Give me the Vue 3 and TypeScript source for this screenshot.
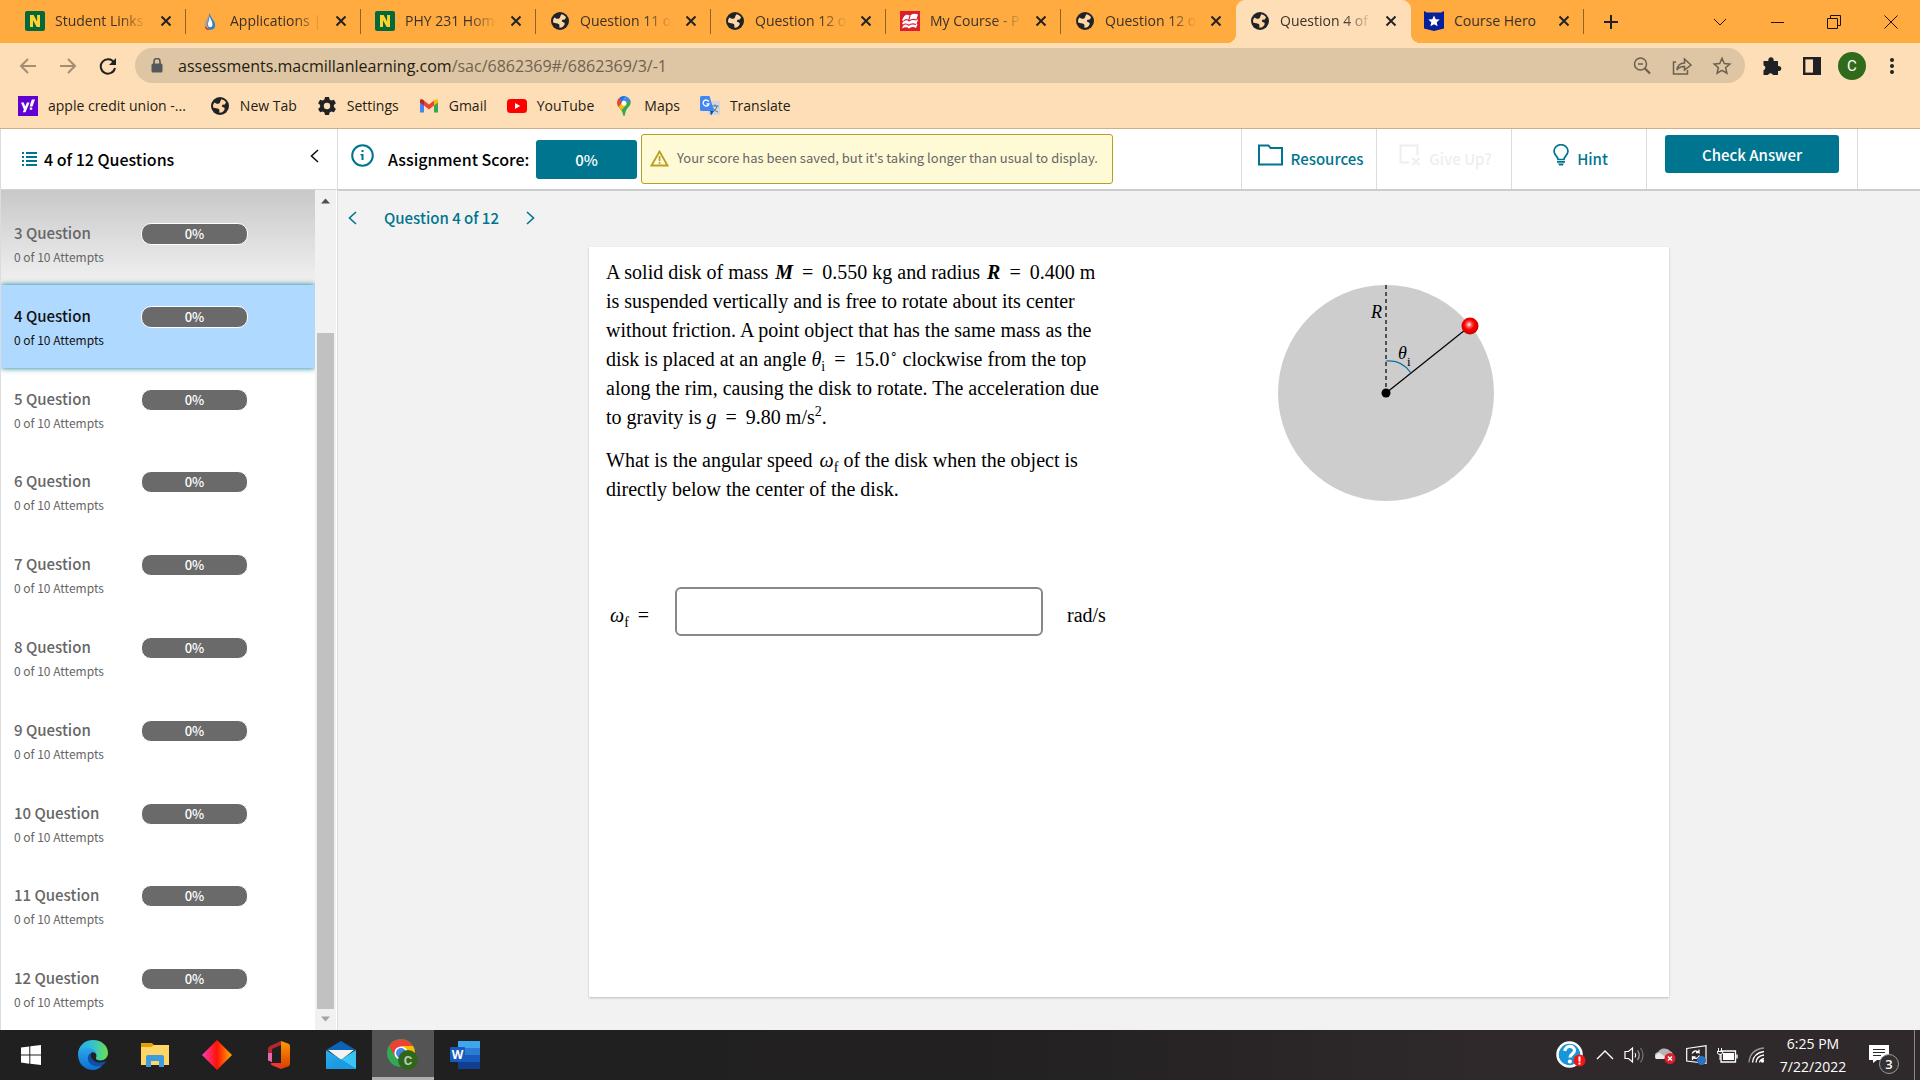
<script setup lang="ts">
import { ref } from 'vue'

interface Tab { icon: string; title: string; active?: boolean; plain?: boolean }
interface Bookmark { icon: string; label: string }

const tabs: Tab[] = [
  { icon: 'norfolk', title: 'Student Links -' },
  { icon: 'drop', title: 'Applications |' },
  { icon: 'norfolk', title: 'PHY 231 Home' },
  { icon: 'globe', title: 'Question 11 of' },
  { icon: 'globe', title: 'Question 12 of' },
  { icon: 'macmillan', title: 'My Course - P' },
  { icon: 'globe', title: 'Question 12 of' },
  { icon: 'globe', title: 'Question 4 of', active: true },
  { icon: 'hero', title: 'Course Hero', plain: true },
]

const bookmarks: Bookmark[] = [
  { icon: 'yahoo', label: 'apple credit union -...' },
  { icon: 'globe', label: 'New Tab' },
  { icon: 'gear', label: 'Settings' },
  { icon: 'gmail', label: 'Gmail' },
  { icon: 'youtube', label: 'YouTube' },
  { icon: 'maps', label: 'Maps' },
  { icon: 'translate', label: 'Translate' },
]

const questions = [3, 4, 5, 6, 7, 8, 9, 10, 11, 12]
const current = ref(4)
const answer = ref('')
</script>

<template>
  <svg class="sprite" aria-hidden="true">
    <defs>
      <linearGradient id="edgeA" x1="0" y1="0" x2="1" y2="0"><stop offset="0" stop-color="#2aa8e8" /><stop offset=".5" stop-color="#33c3d0" /><stop offset="1" stop-color="#6be04a" /></linearGradient>
      <linearGradient id="edgeB" x1="0" y1="0" x2="0" y2="1"><stop offset="0" stop-color="#2fa6ec" /><stop offset="1" stop-color="#0b6fcf" /></linearGradient>
      <linearGradient id="gem" x1="0" y1="0" x2="1" y2="0"><stop offset="0" stop-color="#ff3db5" /><stop offset=".5" stop-color="#ff1208" /><stop offset="1" stop-color="#ffae00" /></linearGradient>
      <linearGradient id="office" x1="0" y1="0" x2="0" y2="1"><stop offset="0" stop-color="#ff9a00" /><stop offset="1" stop-color="#d83b01" /></linearGradient>
      <linearGradient id="mailB" x1="0" y1="0" x2="1" y2="1"><stop offset="0" stop-color="#2bb0f0" /><stop offset="1" stop-color="#1488d8" /></linearGradient>
      <radialGradient id="ball" cx=".45" cy=".42" r=".6"><stop offset="0" stop-color="#fff" /><stop offset=".25" stop-color="#ff5a5a" /><stop offset=".5" stop-color="#fa0000" /><stop offset="1" stop-color="#c80000" /></radialGradient>
    </defs>
    <symbol id="i-norfolk" viewBox="0 0 20 20"><rect width="20" height="20" rx="2" fill="#04693a" /><path d="M5 16V4h3.600l3.500 6.600V4H15v12h-3.300L8 9.200V16z" fill="#ffd22e" /></symbol>
    <symbol id="i-drop" viewBox="0 0 20 20"><path d="M9.500 2C8 7 4.500 9.500 4.500 14a5 5 0 0 0 4 4.800C6 15 9 9 9.500 2z" fill="#b9a08c" /><path d="M9.500 2c-.5 6-3.500 10-1.500 15 1.500 3 6 2 7-1.500C16.200 10.500 11 8 9.500 2z" fill="#2f7fc8" /><path d="M9.500 5c0 5-2.500 7-1 10.500 2 1.500 4 .5 4-2C12.500 10 10 8 9.500 5z" fill="#fff" /><path d="M5 15c1.500 2 3 3 5 4-3 .5-5-1-5-4z" fill="#e01818" /></symbol>
    <symbol id="i-globe" viewBox="0 0 20 20"><circle cx="10" cy="10" r="9" fill="#202326" /><path d="M11.500 3.200c2.200.5 3.600 1.600 4.500 3.200l-1.200 2.100-2.400.2-.6 1.800 2.100 1.100c1.300.6.9 2.100-.1 3.100-.9 1.200-2 1.900-4.100 2.100-.9-.7.5-2.800-1-3.900-1.600-.9-3.200-.8-5.500-1.500C2.700 9.300 3.500 7.500 4.500 6.500c1.700 1 3.100 1.700 4.600.9 1.600-1 .6-1.800 2.400-4.200z" fill="#ffd6a6" /></symbol>
    <symbol id="i-macmillan" viewBox="0 0 20 20"><rect width="20" height="20" fill="#dc1f2e" /><path d="M2 9.500C4 4 6.500 2.500 10 5c2-2.500 4.500-2.700 8-1.500L16.500 8l1.500.7-1.500 4 1 .5-1.500 3.800c-3-1.500-4.500-1-7 .5-2-2-4.500-1.500-7 0L3.500 13.500 2 13l1.500-3z" fill="#fff" /><path d="M3.500 10.200C5.500 8 7.500 8.200 9 10c2.500-2 5-2 8-1M3 14.300c2-2 3.500-1.800 5.500 0 2.500-1.800 4.500-2 7.500-.8M10 5l-1.500 5" fill="none" stroke="#dc1f2e" stroke-width="1.100" /></symbol>
    <symbol id="i-hero" viewBox="0 0 20 20"><path d="M0 0l3 1.500h14L20 0v17.500L10 20 0 17.500z" fill="#06209c" /><path d="M10 4.500l1.700 3.700 4 .4-3 2.700.9 4-3.600-2.100-3.600 2.100.9-4-3-2.700 4-.4z" fill="#fff" /></symbol>
    <symbol id="i-yahoo" viewBox="0 0 20 20"><rect width="20" height="20" fill="#6001d2" /><path d="M3 6.500h2.700l1.600 4 1.600-4h2.700L7.500 16.200H4.800l1.100-2.600zM13.800 3.500h3.200l-2.500 7h-2.900zM11.800 11.500h2.400v2.300h-2.400z" fill="#fff" /></symbol>
    <symbol id="i-gear" viewBox="0 0 20 20"><path fill="#202326" fill-rule="evenodd" d="M8 1h4l.6 2.600 1.700 1 2.600-.8 2 3.400-2 1.900v1.900l2 1.900-2 3.400-2.600-.8-1.700 1L12 19H8l-.6-2.500-1.700-1-2.600.8-2-3.400 2-1.900V9.100l-2-1.900 2-3.400 2.600.8 1.700-1zM10 6.800a3.200 3.200 0 1 0 0 6.400 3.200 3.200 0 0 0 0-6.400z" /></symbol>
    <symbol id="i-gmail" viewBox="0 0 20 20"><path d="M1 5v11.500h4V9z" fill="#4285f4" /><path d="M19 5v11.500h-4V9z" fill="#34a853" /><path d="M5 4.500l5 4 5-4V9.500l-5 4-5-4z" fill="#ea4335" /><path d="M1 4.800C1 3 3.200 2.800 5 4.500v5L1 6.500z" fill="#c5221f" /><path d="M19 4.800C19 3 16.800 2.800 15 4.500v5l4-3z" fill="#fbbc04" /></symbol>
    <symbol id="i-youtube" viewBox="0 0 20 20"><rect y="3" width="20" height="14" rx="3.500" fill="#f00" /><path d="M8 7l5.200 3L8 13z" fill="#fff" /></symbol>
    <symbol id="i-maps" viewBox="0 0 20 20"><path d="M3 7a7 7 0 0 1 2-5l4 4-4.500 5.300A8 8 0 0 1 3 7z" fill="#ea4335" /><path d="M5 2.200A7 7 0 0 1 12.300.6L8 5.600z" fill="#1a73e8" /><path d="M12.300.6A7 7 0 0 1 16.200 4L7.500 14.500c-1-1.300-2.200-2.200-3-3.800z" fill="#4285f4" /><path d="M4.500 10.800L16.200 3.800c2 5-2.200 7.200-4 10.400-1 1.800-1 5.800-2.200 5.800s-1-3.500-2.500-5.500z" fill="#34a853" /><path d="M4.500 10.800L8 6.900l4 2.400-4.800 5.300z" fill="#fbbc04" /><circle cx="10" cy="7.200" r="2.500" fill="#fff" /></symbol>
    <symbol id="i-translate" viewBox="0 0 20 20"><rect x="8" y="5" width="12" height="14" rx="1" fill="#d3d6da" /><path d="M11.500 10h7M15 8.500V10m2 0c-.5 3-2.500 5-5 6m1-4c1 2 3 3.500 5 4" stroke="#54708c" fill="none" /><path d="M1.500 0h8L14 15H1.500A1.500 1.500 0 0 1 0 13.500v-12A1.500 1.500 0 0 1 1.500 0z" fill="#4285f4" /><path d="M10 15h4l-3 4.500z" fill="#174ea6" /><path d="M8.800 5.600A3 3 0 1 0 9 8H6.500" stroke="#fff" stroke-width="1.300" fill="none" /></symbol>
    <symbol id="i-close" viewBox="0 0 12 12"><path d="M1.500 1.500l9 9m0-9l-9 9" stroke="#202124" stroke-width="1.900" /></symbol>
  </svg>

  <div class="screen">
    <header class="chrome">
      <div class="tabstrip">
        <nav class="tabs">
          <div v-for="(tab, i) in tabs" :key="i" class="tab" :class="{ active: tab.active, before: tabs[i + 1]?.active, after: tabs[i - 1]?.active }">
            <svg class="favicon"><use :href="'#i-' + tab.icon" /></svg>
            <span class="tab-title" :class="{ plain: tab.plain }">{{ tab.title }}</span>
            <button class="tab-close" aria-label="Close tab"><svg width="12" height="12"><use href="#i-close" /></svg></button>
          </div>
        </nav>
        <button class="new-tab" aria-label="New tab"><svg width="16" height="16" viewBox="0 0 16 16"><path d="M8 1v14M1 8h14" stroke="#202124" stroke-width="2" /></svg></button>
        <div class="window-buttons">
          <button aria-label="Search tabs"><svg width="14" height="14" viewBox="0 0 14 14"><path d="M1 4l6 6 6-6" /></svg></button>
          <button aria-label="Minimize"><svg width="14" height="14" viewBox="0 0 14 14"><path d="M1 7.500h13" /></svg></button>
          <button aria-label="Restore"><svg width="14" height="14" viewBox="0 0 14 14"><path d="M.5 3.500h10v10H.5zM3.500 3.500v-3h10v10h-3" /></svg></button>
          <button aria-label="Close"><svg width="14" height="14" viewBox="0 0 14 14"><path d="M.5.5l13 13m0-13l-13 13" /></svg></button>
        </div>
      </div>

      <div class="toolbar">
        <div class="nav-buttons">
          <button aria-label="Back"><svg width="18" height="18" viewBox="0 0 18 18" stroke="#a38d73"><path d="M17 9H2m7-7L2 9l7 7" /></svg></button>
          <button aria-label="Forward"><svg width="18" height="18" viewBox="0 0 18 18" stroke="#a38d73"><path d="M1 9h15M9 2l7 7-7 7" /></svg></button>
          <button aria-label="Reload"><svg width="18" height="18" viewBox="0 0 18 18" stroke="#202124"><path d="M15 5.500A7.200 7.200 0 1 0 16 11" /><path d="M17 1v7h-7z" fill="#202124" stroke="none" /></svg></button>
        </div>
        <div class="omnibox">
          <svg width="12" height="16" viewBox="0 0 12 16"><rect y="5.500" x=".5" width="11" height="9" rx="1.500" fill="#54585d" /><path d="M3 6V3.500a3 3 0 0 1 6 0V6" fill="none" stroke="#54585d" stroke-width="1.600" /></svg>
          <p class="url">assessments.macmillanlearning.com<span>/sac/6862369#/6862369/3/-1</span></p>
          <button aria-label="Zoom"><svg width="18" height="18" viewBox="0 0 18 18"><circle cx="7.500" cy="7" r="6" /><path d="M12 11.500l5 5" stroke-width="2.200" /><path d="M5 7h5" /></svg></button>
          <button aria-label="Share"><svg width="20" height="20" viewBox="0 0 20 20"><path d="M4 6H1.500v12h14v-4" /><path d="M5 14c.5-4.500 3-7 7.500-7V3l6.500 6-6.500 5v-3.500C9 10.300 6.500 11.500 5 14z" /></svg></button>
          <button aria-label="Bookmark"><svg width="20" height="20" viewBox="0 0 20 20"><path d="M10 2.300l2.300 5.200 5.500.5-4.200 3.700 1.300 5.500L10 14.300l-4.900 2.900 1.300-5.500L2.200 8l5.500-.5z" /></svg></button>
        </div>
        <div class="actions">
          <button aria-label="Extensions"><svg width="20" height="20" viewBox="0 0 20 20"><path d="M1.500 5h5a2.700 2.700 0 1 1 5 0H16v5a2.600 2.600 0 1 1 0 5v4h-5a2.700 2.700 0 0 0-5 0H1.500v-4.800a2.600 2.600 0 0 0 0-5z" fill="#202124" /></svg></button>
          <button aria-label="Side panel"><svg width="18" height="18" viewBox="0 0 18 18"><rect x="1.200" y="1.200" width="15.600" height="15.600" fill="none" stroke="#202124" stroke-width="2.400" /><path d="M10 1h7v16h-7z" fill="#202124" /></svg></button>
          <button class="avatar" aria-label="Profile">C</button>
          <button aria-label="Menu"><svg width="4" height="18" viewBox="0 0 4 18" fill="#202124"><circle cx="2" cy="3" r="2" /><circle cx="2" cy="9" r="2" /><circle cx="2" cy="15" r="2" /></svg></button>
        </div>
      </div>

      <nav class="bookmarks">
        <a v-for="b in bookmarks" :key="b.label" href="#"><svg class="favicon"><use :href="'#i-' + b.icon" /></svg>{{ b.label }}</a>
      </nav>
    </header>

    <div class="page">
      <aside class="sidebar">
        <div class="side-head">
          <svg width="15" height="14" viewBox="0 0 15 14" fill="#00758f"><path d="M0 0h2v2H0zM4 0h11v2H4zM0 4h2v2H0zM4 4h11v2H4zM0 8h2v2H0zM4 8h11v2H4zM0 12h2v2H0zM4 12h11v2H4z" /></svg>
          <h2>4 of 12 Questions</h2>
          <button aria-label="Collapse"><svg width="9" height="14" viewBox="0 0 9 14"><path d="M8 1L1.500 7 8 13" fill="none" stroke="#111" stroke-width="1.600" /></svg></button>
        </div>
        <div class="side-body">
          <ul class="questions">
            <li v-for="n in questions" :key="n" :class="{ current: n === current }" @click="current = n">
              <div class="q-label"><b>{{ n }} Question</b><small>0 of 10 Attempts</small></div>
              <span class="pill">0%</span>
            </li>
          </ul>
          <div class="scrollbar">
            <svg width="9" height="6" viewBox="0 0 9 6"><path d="M0 5.500L4.500.5 9 5.500z" fill="#505050" /></svg>
            <div class="track"><div class="thumb"></div></div>
            <svg width="9" height="6" viewBox="0 0 9 6"><path d="M0 .5L4.500 5.500 9 .5z" fill="#a3a3a3" /></svg>
          </div>
        </div>
      </aside>

      <main class="content">
        <div class="head">
          <svg class="info" width="23" height="23" viewBox="0 0 23 23"><circle cx="11.500" cy="11.500" r="10.300" fill="none" stroke="#00758f" stroke-width="2" /><path d="M10.500 6h2v2h-2zM9.500 10h3v6h-2v-4.500h-1z" fill="#00758f" /></svg>
          <strong class="score-label">Assignment Score:</strong>
          <button class="score">0%</button>
          <div class="notice" role="status">
            <svg width="19" height="17" viewBox="0 0 19 17"><path d="M9.500 1.500l8 14h-16z" fill="none" stroke="#b89f22" stroke-width="1.800" /><path d="M8.700 6h1.700v5H8.700zM8.700 12h1.700v1.700H8.700z" fill="#b89f22" /></svg>
            <span>Your score has been saved, but it's taking longer than usual to display.</span>
          </div>
          <div class="head-actions">
            <button class="cell"><svg width="25" height="22" viewBox="0 0 25 22"><path d="M1 20.500V1.500h9.500l2 2.500H24v16.500z" fill="none" stroke="#00758f" stroke-width="2" /></svg><span>Resources</span></button>
            <button class="cell disabled" disabled><svg width="22" height="22" viewBox="0 0 22 22"><path d="M10 18.500H1.500v-17h17v10" fill="none" stroke="#eee" stroke-width="2" /><path d="M13.500 14l7 7m0-7l-7 7" stroke="#eee" stroke-width="2" /></svg><span>Give Up?</span></button>
            <button class="cell"><svg width="16" height="22" viewBox="0 0 16 22"><path d="M5 15.500c0-3-4-4.500-4-8.500a7 6.300 0 0 1 14 0c0 4-4 5.500-4 8.500z" fill="none" stroke="#00758f" stroke-width="1.700" /><path d="M4 17h8v1.700H4zM5 19.500h6l-1.200 2H6.200z" fill="#00758f" /></svg><span>Hint</span></button>
            <div class="check-cell"><button class="check">Check Answer</button></div>
          </div>
        </div>

        <nav class="pager">
          <button aria-label="Previous question"><svg width="9" height="14" viewBox="0 0 9 14"><path d="M8 1L1.500 7 8 13" /></svg></button>
          <a href="#">Question 4 of 12</a>
          <button aria-label="Next question"><svg width="9" height="14" viewBox="0 0 9 14"><path d="M1 1l6.500 6L1 13" /></svg></button>
        </nav>

        <article class="card">
          <div class="problem">
            <p>
              A solid disk of mass <b class="var">M</b> <span class="eq">=</span> 0.550 kg and radius <b class="var">R</b> <span class="eq">=</span> 0.400 m<br>
              is suspended vertically and is free to rotate about its center<br>
              without friction. A point object that has the same mass as the<br>
              disk is placed at an angle <i>θ</i><sub>i</sub> <span class="eq">=</span> 15.0<sup class="deg">∘</sup> clockwise from the top<br>
              along the rim, causing the disk to rotate. The acceleration due<br>
              to gravity is <i>g</i> <span class="eq">=</span> 9.80 m/s<sup>2</sup>.
            </p>
            <p>
              What is the angular speed <i class="var">ω</i><sub>f</sub> of the disk when the object is<br>
              directly below the center of the disk.
            </p>
            <div class="answer">
              <label for="omega"><i>ω</i><sub>f</sub> <span class="eq">=</span></label>
              <input id="omega" v-model="answer" type="text">
              <span class="unit">rad/s</span>
            </div>
          </div>
          <svg class="figure" width="220" height="220" viewBox="0 0 220 220">
            <circle cx="110" cy="111" r="108" fill="#cdcdcd" />
            <path d="M110 3v108" stroke="#000" stroke-width="1.200" stroke-dasharray="4 3" />
            <path d="M110 111l84-67" stroke="#000" stroke-width="1.200" />
            <path d="M110 79c10-1 19 3 25 12" stroke="#0c6fa6" stroke-width="1.200" fill="none" />
            <circle cx="110" cy="111" r="4.500" />
            <circle cx="194" cy="44" r="8.500" fill="url(#ball)" />
            <g font-family="Liberation Serif, serif"><text x="95" y="36" font-size="18" font-style="italic">R</text><text x="122" y="77" font-size="18" font-style="italic">θ</text><text x="131" y="84" font-size="13">i</text></g>
          </svg>
        </article>
      </main>
    </div>

    <footer class="taskbar">
      <div class="apps">
        <button aria-label="Start"><svg width="20" height="20" viewBox="0 0 20 20" fill="#fff"><path d="M0 2.500L8.300 1.400V9.500H0zM9.300 1.200L20 0v9.500H9.300zM0 10.500h8.300v8.200L0 17.600zM9.300 10.500H20V20L9.300 18.800z" /></svg></button>
        <button aria-label="Edge"><svg width="30" height="30" viewBox="0 0 30 30"><path d="M0 15C0 6 6.500 0 15 0c9 0 15 6 15 13 0 4.500-3.500 7.500-7.500 7.500-3 0-5-1-4.500-2.500 1-2 .5-5.500-3-8-4-3-11-2-15 5z" fill="url(#edgeA)" /><path d="M0 14.500C1 9 6 7 10 7.500c5 .5 8.500 4 8.500 7.500-1-3-5-4-6-1-2 7 4 13.500 12 11-2.500 3.500-6 5-9.500 5C6 30 0 23 0 14.500z" fill="url(#edgeB)" /><path d="M12.500 13c-4 3-3.500 9 1.500 12 5 2.700 10 1.500 13.500-2.500.6-.7 0-1.300-.7-1-5 2-11 1-13.300-3.500-.9-1.900-1.200-3.300-1-5z" fill="#0f4fa8" /></svg></button>
        <button aria-label="File Explorer"><svg width="28" height="24" viewBox="0 0 28 24"><path d="M0 0h11l3 3v4H0z" fill="#e3a008" /><path d="M0 4h10l3-2h15v20H0z" fill="#ffd666" /><path d="M5 24V14a2 2 0 0 1 2-2h14a2 2 0 0 1 2 2v10h-5v-6h-8v6z" fill="#3d9be0" /></svg></button>
        <button aria-label="Gem"><svg width="30" height="30" viewBox="0 0 30 30"><path d="M15 0l15 15-15 15L0 15z" fill="url(#gem)" /></svg></button>
        <button aria-label="Office"><svg width="24" height="28" viewBox="0 0 24 28"><path d="M14 0L4 4.500C1.500 5.500 1 7 1 9v10.500L5 21V8l9-4z" fill="#b3282d" /><path d="M1 12v7.500L5 21v-9z" fill="#e06bb0" /><path d="M14 0l7 2.500c1.500.5 2 1.500 2 3v17c0 1.500-.5 2.500-2 3L14 28z" fill="url(#office)" /><path d="M4.500 22H14v6L5 24.300c-1.500-.8-1.500-2-.5-2.300z" fill="#f0352f" /></svg></button>
        <button aria-label="Mail"><svg width="30" height="28" viewBox="0 0 30 28"><path d="M0 9L15 0l15 9z" fill="#0b63b5" /><path d="M2 9h26L15 19z" fill="#f3f3f3" /><path d="M0 9l30 19H0z" fill="url(#mailB)" /><path d="M30 9L15 18.500 30 28z" fill="#39c5f3" /><path d="M0 28l15-9.500L30 28z" fill="#1d9ae0" /></svg></button>
        <button class="running" aria-label="Chrome"><svg width="32" height="32" viewBox="0 0 32 32"><circle cx="14" cy="15" r="14" fill="#34a853" /><path d="M2 8a14 14 0 0 1 24 0L14 9l-6 9z" fill="#ea4335" /><path d="M14 8h12a14 14 0 0 1-10 21l4-12z" fill="#fbbc04" /><circle cx="14" cy="15" r="6.600" fill="#fff" /><circle cx="14" cy="15" r="5" fill="#4285f4" /><circle cx="21" cy="22" r="10" fill="#2f661c" /><text x="21" y="27" text-anchor="middle" font-family="Roboto, sans-serif" font-weight="700" font-size="13" fill="#b9cdb1">C</text></svg></button>
        <button aria-label="Word"><svg width="30" height="28" viewBox="0 0 30 28"><path d="M8 0h22v7H8z" fill="#41a5ee" /><path d="M8 7h22v7H8z" fill="#2b7cd3" /><path d="M8 14h22v7H8z" fill="#185abd" /><path d="M8 21h22v7H8z" fill="#103f91" /><rect y="6" width="15" height="15" rx="1" fill="#185abd" /><text x="7.500" y="18" text-anchor="middle" font-family="Open Sans, sans-serif" font-weight="700" font-size="12" fill="#fff">W</text></svg></button>
      </div>
      <div class="tray">
        <svg width="30" height="28" viewBox="0 0 30 28"><circle cx="13.500" cy="13.500" r="12" fill="#1897d8" stroke="#fff" stroke-width="2.500" /><path d="M9 10c0-6 9.500-6 9.500-.5 0 3.500-4.500 3.500-4.500 7" stroke="#fff" stroke-width="3.200" fill="none" /><circle cx="13.800" cy="20.500" r="2" fill="#fff" /><circle cx="23.500" cy="19.500" r="6" fill="#f31515" /><path d="M23.500 15.500v5M23.500 21.500v2" stroke="#fff" stroke-width="2" /></svg>
        <svg width="18" height="10" viewBox="0 0 18 10"><path d="M1 9l8-8 8 8" fill="none" stroke="#fff" stroke-width="1.400" /></svg>
        <svg width="21" height="20" viewBox="0 0 21 20" fill="none" stroke="#fff" stroke-width="1.200"><path d="M1 6.500h3.500L8.500 3v14l-4-3.500H1z" /><path d="M11 8q1.500 2 0 4.500" /><path d="M13.500 5.500q3.500 4.500 0 9.500" stroke="#aaa" /><path d="M16.500 3q5 7 0 14.500" stroke="#777" /></svg>
        <svg width="21" height="18" viewBox="0 0 21 18"><path d="M1 13a4 4 0 0 1 2-7 7 6 0 0 1 12-1 5 5 0 0 1 2 8z" fill="#b5b5b5" /><path d="M1 13a4 4 0 0 1 4-6l8 6z" fill="#e8e8e8" /><circle cx="15" cy="12.500" r="5.500" fill="#d8202c" /><path d="M13 10.500l4 4m0-4l-4 4" stroke="#fff" stroke-width="1.500" /></svg>
        <svg width="21" height="20" viewBox="0 0 21 20"><path d="M.7 3.500L20 .7v17.600L.7 16z" fill="none" stroke="#fff" stroke-width="1.200" /><path d="M6 8.500q3-4.500 7-1V4.500M13 7.500h-3M13.500 10.500q-3 5-7 1.500v3M6.500 12h3" fill="none" stroke="#fff" stroke-width="1.300" /><circle cx="15.500" cy="15.500" r="4.500" fill="#2d72c0" /></svg>
        <svg width="21" height="16" viewBox="0 0 21 16"><rect x="6" y="6" width="11" height="7" fill="#fff" /><path d="M4 4h14.500v11H4zM20 7.500v4" fill="none" stroke="#fff" stroke-width="1.300" /><path d="M1.500 1v3M4.500 1v3M0 4.500h6q0 3-3 3t-3-3M3 7v6" stroke="#fff" fill="#2f292b" /></svg>
        <svg width="17" height="16" viewBox="0 0 17 16" fill="none" stroke="#fff" stroke-width="1.300"><path d="M1 15.500Q2 2.500 16 1" stroke="#999" /><path d="M4.500 15.500Q5.500 6 16 4.500M8 15.500q.5-6.500 8-7.500M11.500 15.500q.5-3 4.500-4" /><circle cx="14.500" cy="14" r="1" fill="#fff" /></svg>
        <div class="clock"><span>6:25 PM</span><span>7/22/2022</span></div>
        <div class="notif"><svg width="20" height="18" viewBox="0 0 20 18"><path d="M0 0h20v15H8l-4 3v-3H0z" fill="#fff" /><path d="M4 4.500h12M4 7.500h12M4 10.500h8" stroke="#2f292b" /></svg><span class="count">3</span></div>
      </div>
    </footer>
  </div>
</template>

<style>
body { margin: 0; background: #f2f2f2; }
</style>

<style scoped>
* { box-sizing: border-box; }
button { border: 0; padding: 0; background: none; font: inherit; color: inherit; cursor: pointer; display: flex; align-items: center; justify-content: center; }
a { color: inherit; text-decoration: none; }
p, h2, ul { margin: 0; padding: 0; }
svg { display: block; flex: none; }
.sprite { position: absolute; width: 0; height: 0; }
.screen { display: flex; flex-direction: column; min-height: 100vh; font-family: "Noto Sans CJK SC", "Source Sans Pro", sans-serif; }

.chrome { background: #fedeb7; border-bottom: 1px solid #cdb088; font-family: "Open Sans", "Segoe UI", sans-serif; color: #3a3128; }
.tabstrip { display: flex; align-items: center; height: 43px; padding-left: 11px; background: #ffab40; }
.tabs { display: flex; align-self: stretch; }
.tab { position: relative; display: flex; align-items: center; width: 175px; padding: 0 12px 2px 14px; }
.tab:last-child { width: 173px; padding-left: 13px; }
.tab::after { content: ""; position: absolute; right: 0; top: 9px; width: 1px; height: 25px; background: #8f6428; }
.tab.active::after, .tab.before::after { display: none; }
.tab.active { background: #fedeb7; border-radius: 9px 9px 0 0; }
.tab.before { background: radial-gradient(circle at 0 0, transparent 9px, #fedeb7 9px) right bottom / 9px 9px no-repeat; }
.tab.after { background: radial-gradient(circle at 100% 0, transparent 9px, #fedeb7 9px) left bottom / 9px 9px no-repeat; }
.favicon { width: 20px; height: 20px; }
.tab-title { flex: 1; margin-left: 10px; white-space: nowrap; font-size: 14px; line-height: 20px; mask-image: linear-gradient(90deg, #000 64px, transparent 92px); }
.tab-title.plain { mask-image: none; }
.tab-close { width: 16px; height: 16px; }
.new-tab { margin-left: 17px; width: 20px; height: 20px; }
.window-buttons { display: flex; margin-left: auto; height: 36px; padding-right: 1px; }
.window-buttons button { width: 57px; }
.window-buttons svg { fill: none; stroke: #1c1208; stroke-width: 1; }

.toolbar { display: flex; align-items: center; height: 45px; padding: 0 8px; }
.nav-buttons { display: flex; width: 127px; flex: none; }
.nav-buttons button { width: 40px; height: 36px; }
.nav-buttons svg { fill: none; stroke-width: 2; }
.omnibox { flex: 1; display: flex; align-items: center; height: 35px; border-radius: 18px; background: #dec5a3; padding: 0 3px 0 16px; }
.url { flex: 1; margin-left: 15px; font-size: 16px; line-height: 24px; color: #241d14; }
.url span { color: #6f6251; }
.omnibox button { width: 40px; height: 30px; }
.omnibox button svg { fill: none; stroke: #6b5f50; stroke-width: 1.500; }
.actions { display: flex; align-items: center; width: 167px; padding-left: 7px; }
.actions button { width: 40px; height: 36px; }
.actions .avatar { width: 28px; height: 28px; margin: 0 6px; border-radius: 14px; background: #2f6b1b; color: #fff; font: 15px Roboto, sans-serif; }

.bookmarks { display: flex; gap: 20px; height: 40px; padding: 0 18px 4px; align-items: center; font-size: 14px; line-height: 20px; }
.bookmarks a { display: flex; align-items: center; gap: 10px; color: #241d14; }
.bookmarks a:first-child { margin-right: 4px; }

.page { flex: 1; display: flex; }
.sidebar { width: 338px; flex: none; display: flex; flex-direction: column; border: 1px solid #dcdcdc; border-width: 0 1px; background: #fff; }
.side-head { display: flex; align-items: center; height: 61px; padding: 0 18px 0 21px; border-bottom: 1px solid #d4d4d4; }
.side-head h2 { flex: 1; margin-left: 7px; font-size: 16px; line-height: 24px; font-weight: 500; color: #000; }
.side-head button { width: 9px; height: 24px; padding-bottom: 6px; }
.side-body { flex: 1; display: flex; padding-right: 1px; }
.questions { flex: 1; display: flex; flex-direction: column; list-style: none; padding-top: 12px; background: linear-gradient(#c8c8c8, #f2f2f2) 0 0 / 100% 96px no-repeat; }
.questions li { flex: 1; display: flex; padding: 19px 0 0 13px; color: #666; cursor: pointer; }
.questions .current { position: relative; background: #b0d9ff; color: #111; box-shadow: 0 0 6px #00758f; clip-path: inset(-8px 0); }
.q-label { width: 127px; display: flex; flex-direction: column; }
.q-label b { font-size: 15px; line-height: 24px; font-weight: 500; }
.q-label small { font-size: 12px; line-height: 24px; }
.pill { width: 107px; height: 22px; margin-top: 2px; border: 1px solid #fff; border-radius: 10px; background: #6a6a6a; color: #fff; font-size: 13px; line-height: 20px; text-align: center; font-weight: 500; }
.scrollbar { width: 21px; display: flex; flex-direction: column; align-items: center; padding: 8px 0; background: #f1f1f1; }
.track { flex: 1; width: 17px; display: flex; flex-direction: column; padding: 5px 0 7px; }
.thumb { flex: 1; margin-top: 124px; background: #c1c1c1; }

.content { flex: 1; min-width: 0; background: #f2f2f2; }
.head { display: flex; align-items: center; height: 62px; padding-left: 13px; background: #fff; border-bottom: 2px solid #ccc; }
.info { margin-bottom: 7px; }
.score-label { margin-left: 14px; width: 148px; font-size: 16px; line-height: 24px; font-weight: 500; white-space: nowrap; }
.score { width: 101px; height: 39px; border-radius: 3px; background: #00758f; color: #fff; font-size: 15px; font-weight: 500; }
.notice { display: flex; align-items: center; gap: 8px; height: 50px; margin-left: 4px; padding: 0 14px 2px 8px; border: 1px solid #b89f22; border-radius: 3px; background: #fffad6; color: #666; font-size: 13px; line-height: 20px; white-space: nowrap; }
.head-actions { display: flex; align-self: stretch; margin-left: auto; margin-right: 62px; }
.cell { width: 135px; gap: 8px; padding-left: 3px; border-left: 1px solid #dcdcdc; color: #00758f; font-size: 15px; line-height: 24px; font-weight: 500; }
.cell svg { margin-bottom: 8px; }
.cell.disabled { color: #eee; }
.check-cell { width: 212px; display: flex; justify-content: center; padding-top: 6px; border: 1px solid #dcdcdc; border-width: 0 1px; }
.check { width: 174px; height: 38px; border-radius: 3px; background: #00758f; color: #fff; font-size: 15px; font-weight: 500; }

.pager { display: flex; align-items: center; height: 56px; padding: 0 10px 2px; gap: 27px; color: #00758f; font-size: 15px; line-height: 24px; font-weight: 500; }
.pager svg { fill: none; stroke: #00758f; stroke-width: 1.600; }

.card { display: flex; max-width: 1080px; min-height: 750px; margin: 0 auto; background: #fff; box-shadow: 0 1px 2px #bbb; padding: 11px 173px 0 17px; justify-content: space-between; font-family: "Liberation Serif", serif; font-size: 20px; line-height: 29px; color: #000; }
.problem { white-space: nowrap; }
.problem p { margin-bottom: 14px; }
.figure { margin-top: 24px; }
.var { font-style: italic; margin-left: 2px; }
.eq { margin: 0 4px; }
sub, sup { font-size: 14px; line-height: 0; }
.deg { font-size: 12px; }
.answer { display: flex; align-items: center; margin-top: 83px; padding-left: 4px; }
.answer label { width: 65px; padding-top: 8px; }
.answer input { width: 368px; height: 49px; margin-right: 24px; border: 2px solid #888; border-radius: 6px; background: #fff; font: inherit; padding: 0 8px; }
.unit { padding-top: 8px; }

.taskbar { display: flex; justify-content: space-between; height: 50px; background: linear-gradient(90deg, #202020 0, #222021 50%, #2f292b 78%); color: #fff; font-family: "Open Sans", "Segoe UI", sans-serif; }
.apps { display: flex; }
.apps button { width: 62px; }
.apps .running { background: #545454; border-bottom: 3px solid #b3aeae; }
.tray { display: flex; align-items: center; gap: 10px; }
.clock { width: 76px; margin-right: 8px; display: flex; flex-direction: column; font-size: 14px; line-height: 23px; text-align: center; }
.notif { position: relative; width: 46px; align-self: stretch; padding-top: 15px; border-right: 1px solid #888; margin-right: 5px; }
.count { position: absolute; left: 10px; top: 24px; width: 20px; height: 20px; border: 1px solid #999; border-radius: 10px; background: #353132; font-size: 13px; line-height: 18px; text-align: center; font-weight: 600; }
</style>
